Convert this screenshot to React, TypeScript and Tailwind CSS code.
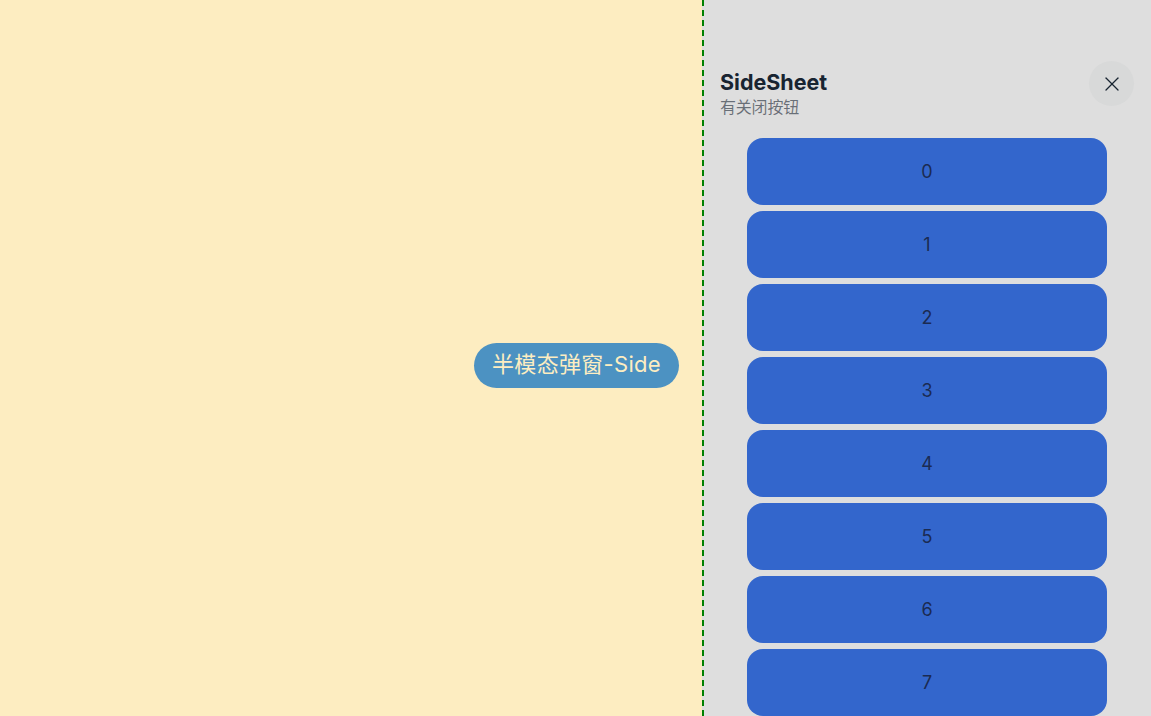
import { X } from 'lucide-react';

const items = [0, 1, 2, 3, 4, 5, 6, 7];

export default function App() {
  return (
    <div className="flex h-[716px] w-full overflow-hidden font-['Inter','Noto_Sans_CJK_SC',sans-serif]">
      {/* Page behind the sheet */}
      <div className="flex flex-1 justify-end bg-[#fdedc1] pr-[23px] pt-[343px]">
        <button className="h-[45px] w-[205px] rounded-full bg-[#4c92c2] pb-[2px] text-[22px] leading-[43px] tracking-[0.3px] text-[#fdedc1]">
          半模态弹窗-Side
        </button>
      </div>

      {/* SideSheet */}
      <div className="flex w-[449px] shrink-0 flex-col border-l-2 border-dashed border-[#008000] bg-[#dedede]">
        <div className="flex h-[138px] shrink-0 items-start justify-between pl-[16px] pr-[17px] pt-[61px]">
          <div className="pt-[6px]">
            <h2 className="text-[21.5px] font-bold leading-[30px] text-[#182431]">SideSheet</h2>
            <p className="mt-[-1px] text-[16px] leading-[22px] tracking-[-0.2px] text-[#182431]/60">有关闭按钮</p>
          </div>
          <button className="flex h-[45px] w-[45px] items-center justify-center rounded-full bg-[#d8d9d9] text-[#182431]">
            <X size={24} strokeWidth={1.3} />
          </button>
        </div>
        <div className="flex flex-col items-center gap-[5.55px] pr-[1px]">
          {items.map((n) => (
            <div
              key={n}
              className="flex h-[67.4px] w-[360px] shrink-0 items-center justify-center rounded-[16px] bg-[#3366cc] text-[18px] text-[#1b2b52]"
            >
              {n}
            </div>
          ))}
        </div>
      </div>
    </div>
  );
}
